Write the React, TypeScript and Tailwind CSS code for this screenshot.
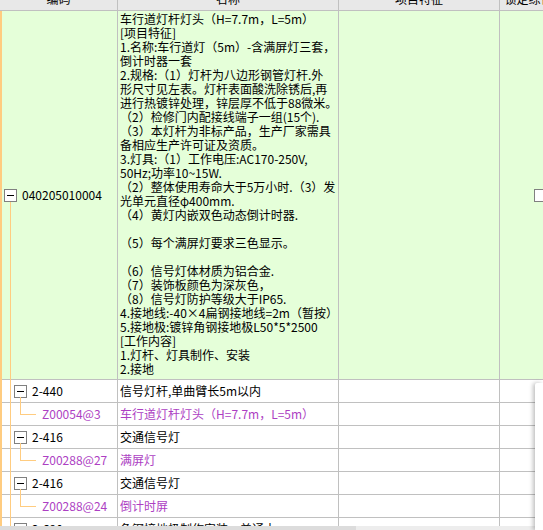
import React from "react";

const mainLines = [
  "车行道灯杆灯头（H=7.7m，L=5m）",
  "[项目特征]",
  "1.名称:车行道灯（5m）-含满屏灯三套，",
  "倒计时器一套",
  "2.规格:（1）灯杆为八边形钢管灯杆.外",
  "形尺寸见左表。灯杆表面酸洗除锈后,再",
  "进行热镀锌处理，锌层厚不低于88微米。",
  "（2）检修门内配接线端子一组(15个).",
  "（3）本灯杆为非标产品，生产厂家需具",
  "备相应生产许可证及资质。",
  "3.灯具:（1）工作电压:AC170-250V,",
  "50Hz;功率10~15W.",
  "（2）整体使用寿命大于5万小时.（3）发",
  "光单元直径φ400mm.",
  "（4）黄灯内嵌双色动态倒计时器.",
  "",
  "（5）每个满屏灯要求三色显示。",
  "",
  "（6）信号灯体材质为铝合金.",
  "（7）装饰板颜色为深灰色，",
  "（8）信号灯防护等级大于IP65.",
  "4.接地线:-40×4扁钢接地线=2m（暂按）",
  "5.接地极:镀锌角钢接地极L50*5*2500",
  "[工作内容]",
  "1.灯杆、灯具制作、安装",
  "2.接地",
];

interface SubRow {
  code: string;
  name: string;
  child?: boolean;
}

const subRows: SubRow[] = [
  { code: "2-440", name: "信号灯杆,单曲臂长5m以内" },
  { code: "Z00054@3", name: "车行道灯杆灯头（H=7.7m，L=5m）", child: true },
  { code: "2-416", name: "交通信号灯" },
  { code: "Z00288@27", name: "满屏灯", child: true },
  { code: "2-416", name: "交通信号灯" },
  { code: "Z00288@24", name: "倒计时屏", child: true },
  { code: "2-690", name: "角钢接地极制作安装，普通土" },
];

function Toggle() {
  return (
    <span className="flex h-[13px] w-[13px] shrink-0 items-center justify-center border border-[#808080] bg-white">
      <span className="h-px w-[7px] bg-black" />
    </span>
  );
}

const cols = "grid grid-cols-[118px_221px_161px_82px]";
const cell = "border-r border-[#c0c0c0]";

export default function App() {
  return (
    <div className="relative h-[530px] w-[543px] overflow-hidden bg-white font-['Noto_Sans_CJK_SC','Noto_Sans_CJK_JP',sans-serif] text-[12px] text-black">
      <div className="h-[526px] overflow-hidden">
        <div className="w-[582px]">
          {/* Header, scrolled so only its lower part shows */}
          <div className={`${cols} h-[11px] border-b border-[#c0c0c0] bg-[#e8e8e8]`}>
            {["编码", "名称", "项目特征", "锁定综合单价"].map((h) => (
              <div key={h} className={`${cell} overflow-hidden`}>
                <div className="-mt-[8px] whitespace-nowrap text-center leading-[14px]">{h}</div>
              </div>
            ))}
          </div>

          <div className="relative">
            {/* Main bill item */}
            <div className={`${cols} border-b border-[#c0c0c0] bg-[#e5ffd9]`}>
              <div className={`${cell} relative flex items-center gap-[5px] pl-[4px]`}>
                <Toggle />
                <span className="leading-[14px]">040205010004</span>
                <span className="absolute bottom-[-1px] left-[10px] top-[calc(50%+7px)] w-px bg-[#ffcc80]" />
              </div>
              <div className={`${cell} pb-[3px] pl-[2px] pt-[1px] leading-[14px]`}>
                {mainLines.map((l, i) => (
                  <div key={i} className="h-[14px] whitespace-nowrap">
                    {l}
                  </div>
                ))}
              </div>
              <div className={cell} />
              <div className={`${cell} flex items-center justify-center`}>
                <span className="h-[13px] w-[13px] border border-[#808080] bg-white" />
              </div>
            </div>

            {/* Quota rows */}
            <div className="relative">
              {subRows.map((r, i) => (
                <div key={i} className={`${cols} h-[23px] border-b border-[#c0c0c0] bg-white`}>
                  <div className={`${cell} relative flex items-center`}>
                    {r.child ? (
                      <>
                        <span className="absolute left-[20px] top-0 h-[11px] w-px bg-[#ffcc80]" />
                        <span className="absolute left-[20px] top-[11px] h-px w-[16px] bg-[#ffcc80]" />
                        <span className="pl-[42px] leading-[14px] text-[#ad3fc3]">{r.code}</span>
                      </>
                    ) : (
                      <>
                        <span className="flex items-center gap-[5px] pl-[14px]">
                          <Toggle />
                          <span className="leading-[14px]">{r.code}</span>
                        </span>
                        <span className="absolute bottom-[-1px] left-[20px] top-[17px] w-px bg-[#ffcc80]" />
                      </>
                    )}
                  </div>
                  <div className={`${cell} flex items-center whitespace-nowrap pl-[2px] leading-[14px] ${r.child ? "text-[#ad3fc3]" : ""}`}>
                    {r.name}
                  </div>
                  <div className={cell} />
                  <div className={cell} />
                </div>
              ))}
              <span className="absolute bottom-0 left-[10px] top-0 w-px bg-[#ffcc80]" />
            </div>

            <span className="absolute bottom-0 left-0 top-0 w-[2px] bg-[#ffcc80]" />
          </div>
        </div>
      </div>

      {/* Horizontal scrollbar */}
      <div className="flex h-[4px] bg-[#ededed]">
        <div className="h-full w-[356px] bg-[#dcdcdc]" />
      </div>

      {/* Floating panel edge on the right */}
      <div className="absolute bottom-0 right-0 top-[383px] w-[8px] rounded-tl-[2px] bg-white shadow-[-2px_0_4px_rgba(0,0,0,0.25)]" />
    </div>
  );
}
